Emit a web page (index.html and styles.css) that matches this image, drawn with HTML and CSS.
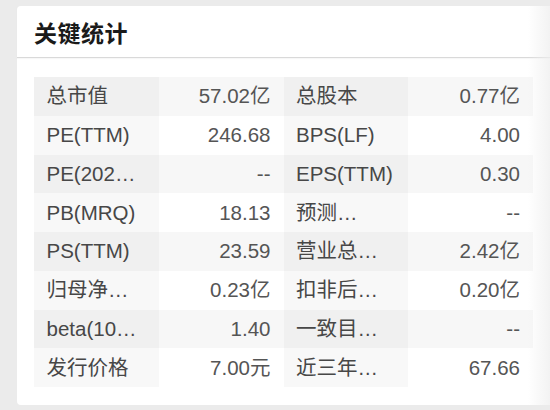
FILE: index.html
```html
<!DOCTYPE html>
<html lang="zh-CN">
<head>
<meta charset="utf-8">
<title>关键统计</title>
<link rel="stylesheet" href="styles.css">
</head>
<body>
<section class="card">
  <header class="card-head"><h2 class="card-title">关键统计</h2></header>
  <div class="card-body">
    <table class="stats">
      <tbody>
        <tr><td class="k">总市值</td><td class="v">57.02亿</td><td class="k">总股本</td><td class="v">0.77亿</td></tr>
        <tr><td class="k">PE(TTM)</td><td class="v">246.68</td><td class="k">BPS(LF)</td><td class="v">4.00</td></tr>
        <tr><td class="k">PE(202…</td><td class="v">--</td><td class="k">EPS(TTM)</td><td class="v">0.30</td></tr>
        <tr><td class="k">PB(MRQ)</td><td class="v">18.13</td><td class="k">预测…</td><td class="v">--</td></tr>
        <tr><td class="k">PS(TTM)</td><td class="v">23.59</td><td class="k">营业总…</td><td class="v">2.42亿</td></tr>
        <tr><td class="k">归母净…</td><td class="v">0.23亿</td><td class="k">扣非后…</td><td class="v">0.20亿</td></tr>
        <tr><td class="k">beta(10…</td><td class="v">1.40</td><td class="k">一致目…</td><td class="v">--</td></tr>
        <tr><td class="k">发行价格</td><td class="v">7.00元</td><td class="k">近三年…</td><td class="v">67.66</td></tr>
      </tbody>
    </table>
  </div>
  <div class="fade"></div>
</section>
</body>
</html>
```
FILE: styles.css
```css
html, body {
  margin: 0;
  padding: 0;
  background: #ebebeb;
}
body {
  padding: 6px 0 0 17px;
  font-family: "Liberation Sans", Arial, "Noto Sans CJK SC", sans-serif;
  overflow: hidden;
}
.card {
  position: relative;
  width: 533px;
  height: 399px;
  background: #ffffff;
  border-radius: 4px 0 0 4px;
  box-sizing: border-box;
}
.card-head {
  height: 51px;
  display: flex;
  align-items: center;
  padding-left: 17px;
  border-bottom: 1px solid #d9d9d9;
  box-shadow: 0 1px 1px rgba(0, 0, 0, 0.03);
}
.card-title {
  margin: 0;
  font-family: "Noto Sans CJK SC", sans-serif;
  font-size: 23px;
  font-weight: 700;
  color: #1a1a1a;
  letter-spacing: 0.5px;
}
.card-body {
  padding: 19px 17px 0 17px;
}
.stats {
  width: 499px;
  border-collapse: collapse;
  table-layout: fixed;
  font-size: 20.5px;
  color: #474747;
}
.stats tr {
  height: 38.75px;
}
.stats tr:nth-child(odd) {
  background: #f7f7f7;
}
.stats td {
  padding: 0 13px 0 12.5px;
  white-space: nowrap;
  overflow: hidden;
  vertical-align: middle;
  line-height: 38px;
}
.stats .k {
  text-align: left;
  background: rgba(0, 0, 0, 0.028);
}
.stats .v {
  text-align: right;
  color: #555555;
}
.fade {
  position: absolute;
  top: 0;
  right: 0;
  width: 22px;
  height: 100%;
  background: linear-gradient(to right, rgba(240, 240, 240, 0), rgba(238, 238, 238, 0.75));
  pointer-events: none;
}
```
